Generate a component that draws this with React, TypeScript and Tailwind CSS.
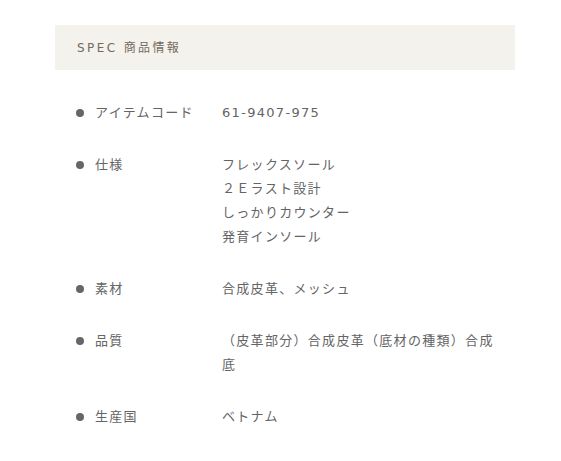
import React from 'react'

const specs: { label: string; value: string[] }[] = [
  { label: 'アイテムコード', value: ['61-9407-975'] },
  { label: '仕様', value: ['フレックスソール', '２Ｅラスト設計', 'しっかりカウンター', '発育インソール'] },
  { label: '素材', value: ['合成皮革、メッシュ'] },
  { label: '品質', value: ['（皮革部分）合成皮革（底材の種類）合成底'] },
  { label: '生産国', value: ['ベトナム'] },
]

const App = () => {
  return (
    <section className="pt-[25px] pl-[55px] w-[515px] font-['DejaVu_Sans','Noto_Sans_CJK_JP',sans-serif]">
      <div className="h-[45px] flex items-center pl-[22px] bg-[#f3f2ed] text-[12px] tracking-[0.2em] text-[#76695f]">
        SPEC 商品情報
      </div>
      <ul className="flex flex-col gap-[28px] pt-[31px] pl-[21px] pr-[17px] text-[13px] leading-[24px] tracking-[0.1em] text-[#646464]">
        {specs.map((s) => (
          <li key={s.label} className="flex items-start">
            <span className="mt-[8px] w-[8px] h-[8px] rounded-full bg-[#666] shrink-0" />
            <span className="ml-[11px] w-[127px] shrink-0">{s.label}</span>
            <div className="flex-1">
              {s.value.map((v) => (
                <p key={v}>{v}</p>
              ))}
            </div>
          </li>
        ))}
      </ul>
    </section>
  )
}

export default App
